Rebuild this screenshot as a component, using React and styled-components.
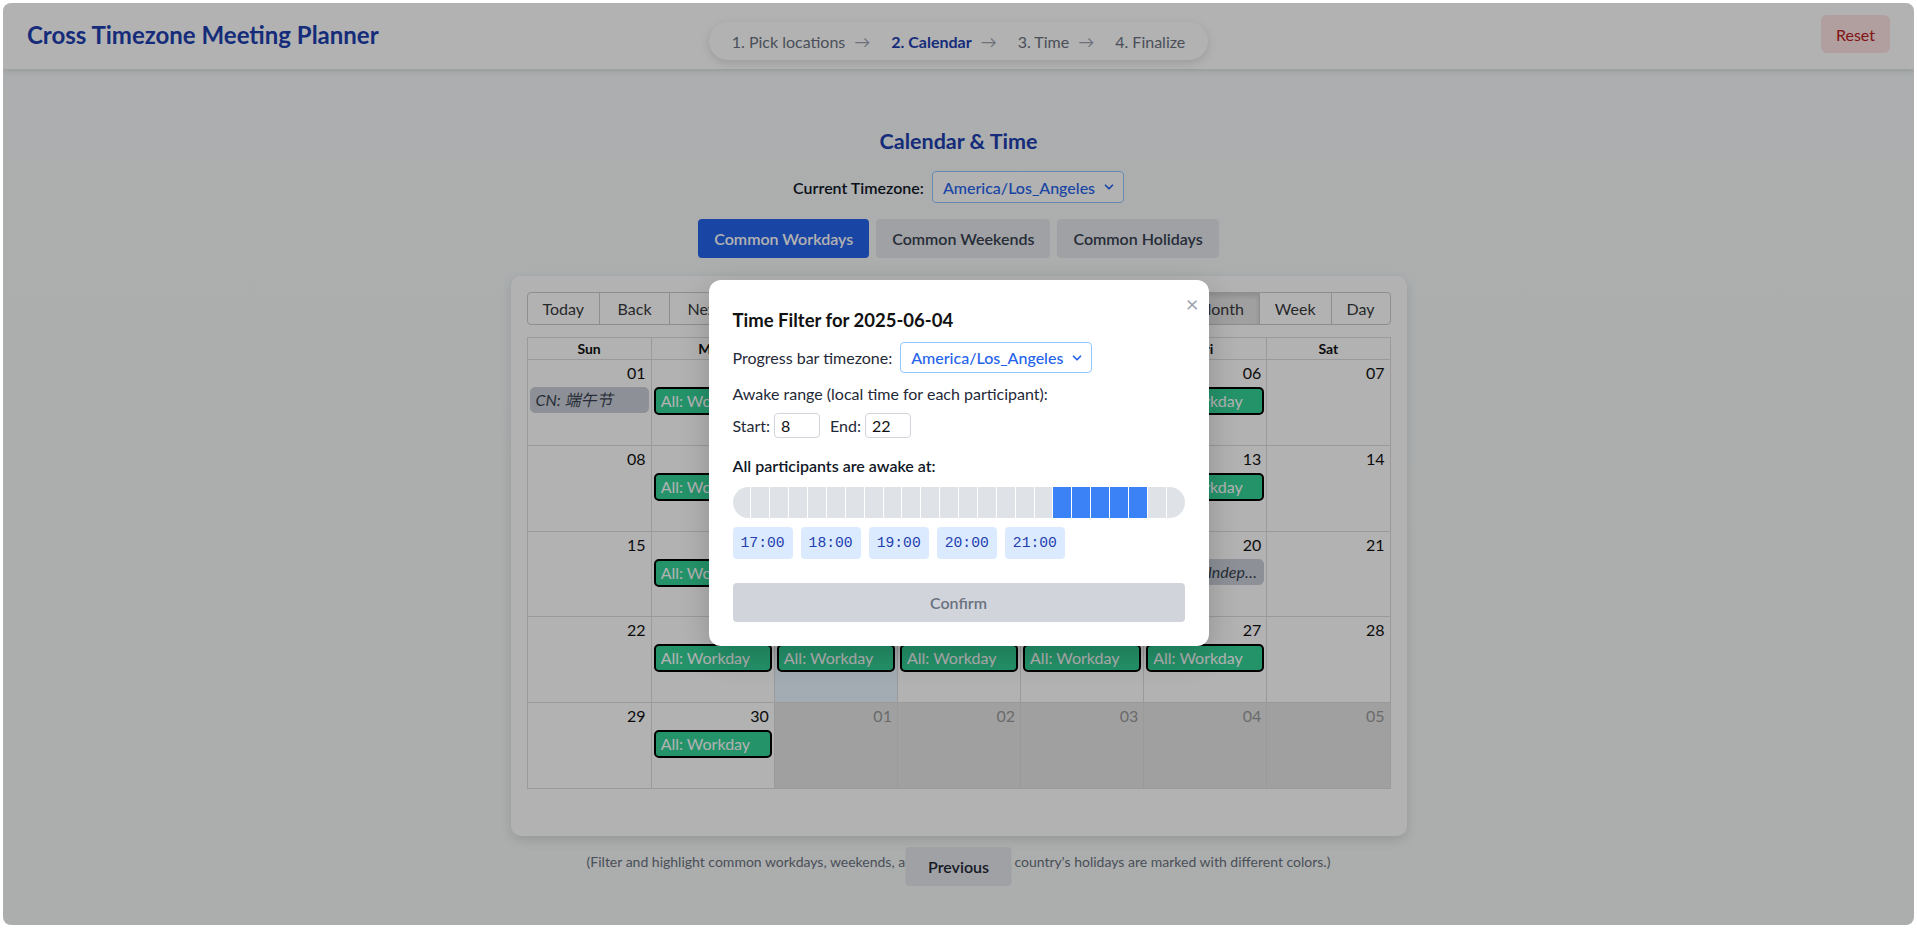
import React from 'react';
import styled, { createGlobalStyle } from 'styled-components';
import { ChevronDown } from 'lucide-react';

const GlobalStyle = createGlobalStyle`
  html, body {
    margin: 0;
    padding: 0;
    background: #ffffff;
  }
  body {
    font-family: Lato, "Noto Sans", "Noto Sans CJK SC", sans-serif;
    color: #111827;
  }
  * {
    box-sizing: border-box;
  }
`;

const Shell = styled.div`
  position: relative;
  margin: 3px;
  height: 922px;
  border-radius: 8px;
  overflow: hidden;
  background: linear-gradient(180deg, #f6fafb 0%, #f6f9f8 100%);
  display: flex;
  flex-direction: column;
`;

const Header = styled.header`
  height: 66px;
  flex-shrink: 0;
  background: #ffffff;
  box-shadow: 0 2px 6px rgba(0, 0, 0, 0.12);
  display: grid;
  grid-template-columns: 1fr auto 1fr;
  align-items: start;
  padding: 12px 24px 0;
  position: relative;
  z-index: 1;
`;

const AppTitle = styled.h1`
  margin: 5px 0 0;
  font-size: 24px;
  line-height: 29px;
  font-weight: 700;
  color: #1e40af;
`;

const Steps = styled.nav`
  margin-top: 7px;
  height: 38px;
  padding: 0 23px;
  display: flex;
  align-items: center;
  gap: 21px;
  background: #ffffff;
  border-radius: 9999px;
  box-shadow: 0 3px 10px rgba(0, 0, 0, 0.13);
  font-size: 16px;
`;

const Step = styled.span`
  color: ${p => (p.active ? '#1e40af' : '#6b7280')};
  font-weight: ${p => (p.active ? 700 : 400)};
  white-space: nowrap;
`;

const Arrow = styled.span`
  margin-left: 9px;
  color: #9ca3af;
  font-weight: 400;
`;

const ResetButton = styled.button`
  justify-self: end;
  height: 38px;
  padding: 0 15px;
  border: none;
  border-radius: 6px;
  background: #fee2e2;
  color: #b91c1c;
  font-family: inherit;
  font-size: 16px;
  cursor: pointer;
`;

const Main = styled.main`
  display: flex;
  flex-direction: column;
  align-items: center;
  padding-top: 60px;
`;

const SectionTitle = styled.h2`
  margin: 0 0 18px;
  font-size: 21.5px;
  line-height: 24px;
  font-weight: 700;
  color: #1e40af;
`;

const TimezoneRow = styled.div`
  display: flex;
  align-items: center;
  gap: 8px;
  margin-bottom: 16px;
`;

const FieldLabel = styled.label`
  font-size: 16px;
  font-weight: ${p => (p.strong ? 600 : 400)};
  color: ${p => (p.strong ? '#111827' : '#1f2937')};
  white-space: nowrap;
`;

const SelectWrap = styled.div`
  position: relative;
  width: 192px;
  height: ${p => p.h}px;
`;

const Select = styled.select`
  appearance: none;
  width: 100%;
  height: 100%;
  padding: 0 26px 0 10px;
  border: 1px solid #93c5fd;
  border-radius: 4px;
  background: #ffffff;
  color: #2563eb;
  font-family: inherit;
  font-size: 16px;
  font-weight: 500;
`;

const SelectChevron = styled(ChevronDown)`
  position: absolute;
  right: 8px;
  top: 50%;
  transform: translateY(-50%);
  color: #2563eb;
  pointer-events: none;
`;

const FilterRow = styled.div`
  display: flex;
  gap: 7px;
  margin-bottom: 18px;
`;

const FilterButton = styled.button`
  height: 39px;
  padding: 0 16px;
  border: none;
  border-radius: 4px;
  background: ${p => (p.active ? '#2563eb' : '#e5e7eb')};
  color: ${p => (p.active ? '#ffffff' : '#374151')};
  font-family: inherit;
  font-size: 16px;
  font-weight: 600;
  cursor: pointer;
`;

const CalendarCard = styled.section`
  width: 896px;
  padding: 16px 16px 47px;
  background: #ffffff;
  border-radius: 10px;
  box-shadow: 0 4px 12px rgba(0, 0, 0, 0.12);
`;

const Toolbar = styled.div`
  display: flex;
  align-items: center;
  justify-content: space-between;
  margin-bottom: 12px;
`;

const ButtonGroup = styled.div`
  display: flex;
`;

const ToolButton = styled.button`
  height: 33px;
  min-width: ${p => p.w || 0}px;
  padding: 0 15px;
  border: 1px solid #cccccc;
  margin-left: -1px;
  background: ${p => (p.active ? '#e6e6e6' : '#ffffff')};
  box-shadow: ${p => (p.active ? 'inset 0 3px 5px rgba(0, 0, 0, 0.125)' : 'none')};
  color: #373a3c;
  font-family: inherit;
  font-size: 16px;
  cursor: pointer;

  &:first-child {
    margin-left: 0;
    border-radius: 4px 0 0 4px;
  }
  &:last-child {
    border-radius: 0 4px 4px 0;
  }
`;

const ToolLabel = styled.span`
  font-size: 16px;
  color: #373a3c;
`;

const MonthGrid = styled.div`
  border: 1px solid #dddddd;
  display: flex;
  flex-direction: column;
  height: 452px;
`;

const WeekdayRow = styled.div`
  display: grid;
  grid-template-columns: repeat(7, 1fr);
  border-bottom: 1px solid #dddddd;
`;

const Weekday = styled.div`
  height: 21px;
  line-height: 21px;
  text-align: center;
  font-size: 14px;
  font-weight: 700;
  color: #111;
  & + & {
    border-left: 1px solid #dddddd;
  }
`;

const WeekRow = styled.div`
  flex: 1;
  display: grid;
  grid-template-columns: repeat(7, 1fr);
  & + & {
    border-top: 1px solid #dddddd;
  }
`;

const DayCell = styled.div`
  display: flex;
  flex-direction: column;
  min-width: 0;
  background: ${p => (p.off ? '#e6e6e6' : p.today ? '#eaf6ff' : 'transparent')};
  & + & {
    border-left: 1px solid #dddddd;
  }
`;

const DateNum = styled.div`
  padding: 3px 5px 0;
  line-height: 20px;
  text-align: right;
  font-size: 16px;
  color: ${p => (p.off ? '#999999' : '#111111')};
`;

const Event = styled.div`
  margin: 4px 2px 0;
  padding: 2px 5px;
  border-radius: 5px;
  font-size: 16px;
  line-height: 20px;
  white-space: nowrap;
  overflow: hidden;
  text-overflow: ellipsis;
  ${p =>
    p.kind === 'holiday'
      ? `
    background: #cbd0d8;
    border: 1px solid #cbd0d8;
    color: #374151;
    font-style: italic;
  `
      : `
    background: #34d399;
    border: 2px solid #000000;
    color: #ffffff;
  `}
`;

const NoteArea = styled.div`
  position: relative;
  margin-top: 18px;
`;

const Note = styled.p`
  margin: 0;
  font-size: 14px;
  line-height: 16px;
  color: #6b7280;
  text-align: center;
`;

const PreviousButton = styled.button`
  position: absolute;
  left: 50%;
  top: -7px;
  transform: translateX(-50%);
  height: 39px;
  padding: 0 23px;
  border: none;
  border-radius: 4px;
  background: #e5e7eb;
  color: #1f2937;
  font-family: inherit;
  font-size: 16px;
  font-weight: 600;
`;

const Overlay = styled.div`
  position: absolute;
  inset: 0;
  z-index: 10;
  background: rgba(0, 0, 0, 0.3);
  display: flex;
  align-items: center;
  justify-content: center;
`;

const Modal = styled.div`
  position: relative;
  width: 500px;
  margin-top: -2px;
  padding: 26px 24px 24px;
  background: #ffffff;
  border-radius: 12px;
  box-shadow: 0 10px 30px rgba(0, 0, 0, 0.2);
`;

const CloseButton = styled.button`
  position: absolute;
  top: 11px;
  right: 8px;
  border: none;
  background: none;
  color: #9ca3af;
  font-size: 22px;
  line-height: 1;
  padding: 2px;
  font-family: inherit;
  cursor: pointer;
`;

const ModalTitle = styled.h3`
  margin: 0 0 8px;
  font-size: 18.5px;
  line-height: 28px;
  font-weight: 700;
  color: #111111;
`;

const ModalRow = styled.div`
  display: flex;
  align-items: center;
  gap: ${p => p.gap || 8}px;
  margin-top: ${p => p.mt || 0}px;
  line-height: 24px;
`;

const SmallInput = styled.input`
  width: 46px;
  height: 25px;
  padding: 0 6px;
  border: 1px solid #d1d5db;
  border-radius: 4px;
  font-family: inherit;
  font-size: 16px;
  color: #111;
`;

const EndLabel = styled(FieldLabel)`
  margin-left: 6px;
`;

const AwakeBar = styled.div`
  margin-top: 9px;
  height: 31px;
  display: flex;
  border-radius: 9999px;
  overflow: hidden;
`;

const HourSlot = styled.div`
  flex: 1;
  background: ${p => (p.on ? '#3b82f6' : '#dfe2e7')};
  & + & {
    border-left: 1px solid #ffffff;
  }
`;

const Chips = styled.div`
  display: flex;
  gap: 8px;
  margin-top: 9px;
`;

const Chip = styled.span`
  height: 32px;
  line-height: 32px;
  padding: 0 8px;
  border-radius: 4px;
  background: #dbeafe;
  color: #1e40af;
  font-family: "Liberation Mono", "DejaVu Sans Mono", monospace;
  font-size: 14.7px;
`;

const ConfirmButton = styled.button`
  width: 100%;
  height: 39px;
  margin-top: 24px;
  border: none;
  border-radius: 4px;
  background: #d1d5db;
  color: #6b7280;
  font-family: inherit;
  font-size: 16px;
  font-weight: 600;
`;

const weekdays = ['Sun', 'Mon', 'Tue', 'Wed', 'Thu', 'Fri', 'Sat'];

const workday = { kind: 'work', title: 'All: Workday' };

const buildWeeks = () => {
  const days = [];
  for (let d = 1; d <= 30; d++) days.push({ n: d, off: false });
  for (let d = 1; d <= 5; d++) days.push({ n: d, off: true });
  const weeks = [];
  for (let i = 0; i < days.length; i += 7) weeks.push(days.slice(i, i + 7));
  return weeks;
};

const eventsFor = (day, col) => {
  if (day.off) return [];
  if (day.n === 1) return [{ kind: 'holiday', title: 'CN: 端午节' }];
  if (day.n === 20) return [{ kind: 'holiday', title: 'US: Nat Independence Day' }];
  if (col >= 1 && col <= 5) return [workday];
  return [];
};

const awakeHours = [17, 18, 19, 20, 21];

export default function App() {
  const weeks = buildWeeks();

  return (
    <>
      <GlobalStyle />
      <Shell>
        <Header>
          <AppTitle>Cross Timezone Meeting Planner</AppTitle>
          <Steps>
            <Step>1. Pick locations<Arrow>→</Arrow></Step>
            <Step active>2. Calendar<Arrow>→</Arrow></Step>
            <Step>3. Time<Arrow>→</Arrow></Step>
            <Step>4. Finalize</Step>
          </Steps>
          <ResetButton>Reset</ResetButton>
        </Header>

        <Main>
          <SectionTitle>Calendar &amp; Time</SectionTitle>
          <TimezoneRow>
            <FieldLabel strong>Current Timezone:</FieldLabel>
            <SelectWrap h={32}>
              <Select defaultValue="America/Los_Angeles">
                <option>America/Los_Angeles</option>
              </Select>
              <SelectChevron size={14} strokeWidth={3} />
            </SelectWrap>
          </TimezoneRow>
          <FilterRow>
            <FilterButton active>Common Workdays</FilterButton>
            <FilterButton>Common Weekends</FilterButton>
            <FilterButton>Common Holidays</FilterButton>
          </FilterRow>

          <CalendarCard>
            <Toolbar>
              <ButtonGroup>
                <ToolButton w={71}>Today</ToolButton>
                <ToolButton w={71}>Back</ToolButton>
                <ToolButton w={71}>Next</ToolButton>
              </ButtonGroup>
              <ToolLabel>June 2025</ToolLabel>
              <ButtonGroup>
                <ToolButton active>Month</ToolButton>
                <ToolButton>Week</ToolButton>
                <ToolButton>Day</ToolButton>
              </ButtonGroup>
            </Toolbar>
            <MonthGrid>
              <WeekdayRow>
                {weekdays.map(w => (
                  <Weekday key={w}>{w}</Weekday>
                ))}
              </WeekdayRow>
              {weeks.map((week, wi) => (
                <WeekRow key={wi}>
                  {week.map((day, col) => (
                    <DayCell key={col} off={day.off} today={!day.off && day.n === 24}>
                      <DateNum off={day.off}>{String(day.n).padStart(2, '0')}</DateNum>
                      {eventsFor(day, col).map((ev, i) => (
                        <Event key={i} kind={ev.kind}>{ev.title}</Event>
                      ))}
                    </DayCell>
                  ))}
                </WeekRow>
              ))}
            </MonthGrid>
          </CalendarCard>

          <NoteArea>
            <Note>
              (Filter and highlight common workdays, weekends, and holidays. Each country's holidays are marked with different colors.)
            </Note>
            <PreviousButton>Previous</PreviousButton>
          </NoteArea>
        </Main>

        <Overlay>
          <Modal>
            <CloseButton aria-label="Close">×</CloseButton>
            <ModalTitle>Time Filter for 2025-06-04</ModalTitle>
            <ModalRow>
              <FieldLabel>Progress bar timezone:</FieldLabel>
              <SelectWrap h={31}>
                <Select defaultValue="America/Los_Angeles">
                  <option>America/Los_Angeles</option>
                </Select>
                <SelectChevron size={14} strokeWidth={3} />
              </SelectWrap>
            </ModalRow>
            <ModalRow mt={9}>
              <FieldLabel>Awake range (local time for each participant):</FieldLabel>
            </ModalRow>
            <ModalRow mt={7} gap={4}>
              <FieldLabel>Start:</FieldLabel>
              <SmallInput defaultValue="8" />
              <EndLabel>End:</EndLabel>
              <SmallInput defaultValue="22" />
            </ModalRow>
            <ModalRow mt={16}>
              <FieldLabel strong>All participants are awake at:</FieldLabel>
            </ModalRow>
            <AwakeBar>
              {Array.from({ length: 24 }, (_, h) => (
                <HourSlot key={h} on={awakeHours.includes(h)} />
              ))}
            </AwakeBar>
            <Chips>
              {awakeHours.map(h => (
                <Chip key={h}>{`${h}:00`}</Chip>
              ))}
            </Chips>
            <ConfirmButton disabled>Confirm</ConfirmButton>
          </Modal>
        </Overlay>
      </Shell>
    </>
  );
}
